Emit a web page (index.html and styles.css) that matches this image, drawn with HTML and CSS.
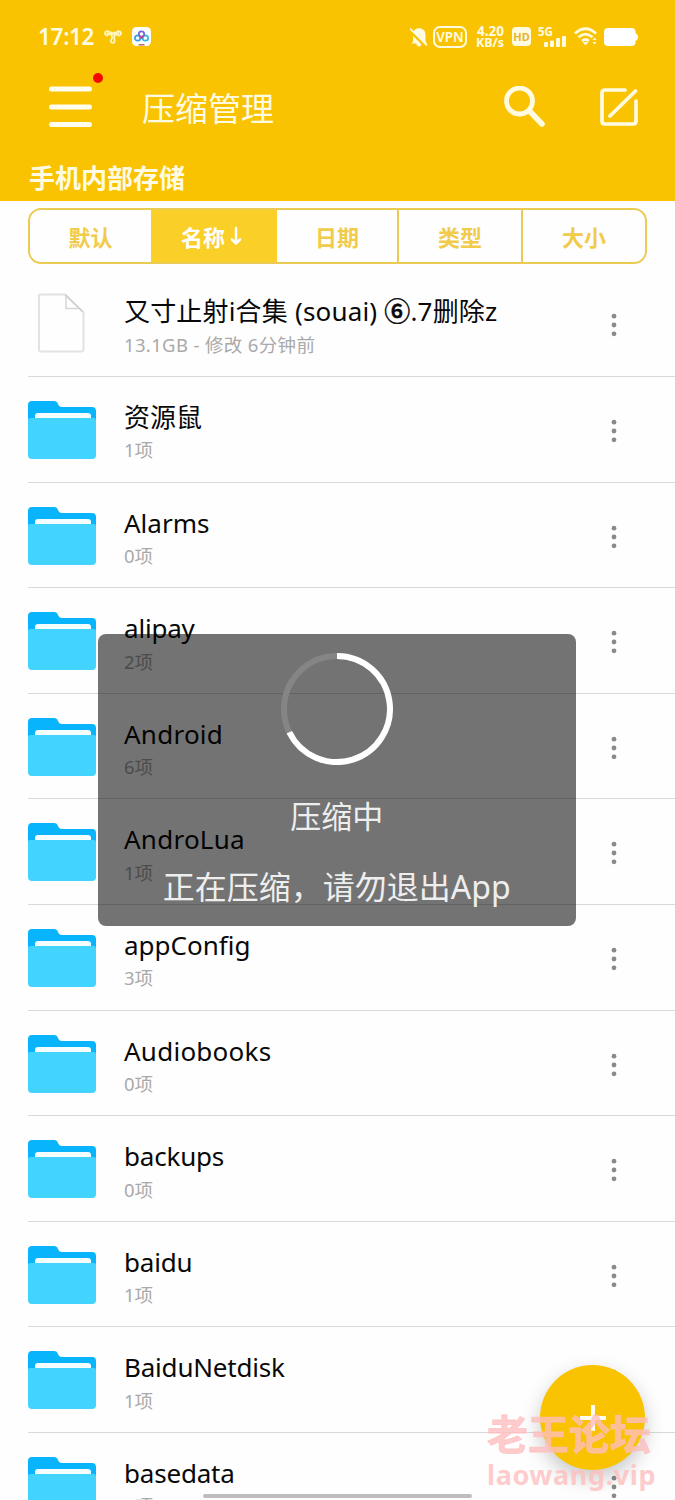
FILE: index.html
```
<!DOCTYPE html>
<html lang="zh-CN">
	<head>
		<meta charset="utf-8"/>
		<title>压缩管理</title>
		<link rel="stylesheet" href="styles.css">
	</head>
	<body>
		<!-- Shared icons -->
		<svg class="icon-defs" width="0" height="0">
			<symbol id="folder" viewBox="0 0 68 58">
				<path fill="#08b4fb" d="M4 0H26Q29 0 30 3Q31 6 34 6H64Q68 6 68 10V40H0V4Q0 0 4 0Z"/>
				<path fill="#f4fdff" d="M7 25V15Q7 12 10 12H60Q63 12 63 15V25Z"/>
				<path fill="#43d3ff" d="M0 19Q0 17 2 17H66Q68 17 68 19V54Q68 58 64 58H4Q0 58 0 54Z"/>
			</symbol>
			<symbol id="dots" viewBox="0 0 6 24">
				<g fill="#8a8a8a"><circle cx="3" cy="3.2" r="2.4"/><circle cx="3" cy="12" r="2.4"/><circle cx="3" cy="20.8" r="2.4"/></g>
			</symbol>
		</svg>

		<!-- Top area -->
		<header class="header">
			<div class="status-bar">
				<span class="clock">17:12</span>
				<svg class="knot" width="18" height="14" viewBox="0 0 18 14" fill="none" stroke="#fff6c0" stroke-width="1.8" stroke-linecap="round">
					<path d="M3.500 5.500Q1 5 1 3.200Q1.300 1 4 1.200Q6 1.500 7.500 5Q9 8 6.800 10.500Q7 13 9 12.800Q11 12.500 10.500 10Q9.500 7 11 4.500Q12.500 1.200 15 1.200Q17 1.600 17 3.500Q16.800 5.500 14.500 5.500M3.500 3.300L5.500 4.500M14.500 3.300L12.500 4.800M7.500 2.500L9 4L10.500 2.500"/>
				</svg>
				<svg class="cloud-app" width="19" height="19" viewBox="0 0 19 19">
					<rect width="19" height="19" rx="4.500" fill="#fff"/>
					<g fill="none" stroke-width="1.700"><circle cx="5.600" cy="11" r="2.700" stroke="#2d9fe8"/><circle cx="13.400" cy="11" r="2.700" stroke="#35b4ea"/><circle cx="9.500" cy="7" r="2.700" stroke="#6b6bd0"/><path d="M7.500 9L9.500 11L11.500 9" stroke="#c0478e"/></g>
					<path d="M6.500 17.800H12.500" stroke="#b76b68" stroke-width="1.500"/>
				</svg>
				<div class="status-right">
					<svg width="18" height="20" viewBox="0 0 18 20">
						<path fill="#fffbe0" d="M3 15V8Q3 1.500 9 1Q15.500 1.500 15.500 8V14L17 16.500H1ZM6 16.500H12Q11 19.500 9 19.500Q7 19.500 6 16.500Z"/>
						<path d="M0 4L15 19" stroke="#f9c302" stroke-width="2.500"/><path d="M0 1.500L17 18.500" stroke="#fffbe0" stroke-width="1.700"/>
					</svg>
					<span class="vpn">VPN</span>
					<span class="speed"><b>4.20</b><b>KB/s</b></span>
					<span class="hd">HD</span>
					<span class="signal">
						<b>5G</b>
						<svg width="22" height="11" viewBox="0 0 22 11" fill="#fffbe0"><rect y="6" width="4" height="5" rx="1"/><rect x="6" y="4.500" width="4" height="6.500" rx="1"/><rect x="12" y="2" width="4" height="9" rx="1"/><rect x="18" width="4" height="11" rx="1"/></svg>
					</span>
					<svg class="wifi" width="24" height="19" viewBox="0 0 24 19" fill="none" stroke="#fffbe0" stroke-width="2.800">
						<path d="M1 6.500Q11.500 -3 22 6.500M4.500 10.300Q11.500 4 18.500 10.300M8 14Q11.500 11 15 14"/>
						<path d="M8.500 15H14.500L11.500 18.500Z" fill="#fffbe0" stroke="none"/><path d="M18.500 13L20.500 10.500L22.500 13ZM18.500 15L20.500 17.500L22.500 15Z" fill="#fffbe0" stroke="none"/>
					</svg>
					<svg class="battery" width="34" height="18" viewBox="0 0 34 18"><rect width="31.500" height="18" rx="4" fill="#fff"/><path d="M31 5Q34 6 34 9Q34 12 31 13Z" fill="#fff"/></svg>
				</div>
			</div>
			<div class="app-bar">
				<div class="menu">
					<svg width="44" height="42" viewBox="0 0 44 42" stroke="#fffef0" stroke-width="5" stroke-linecap="round"><path d="M3.500 3H41.500M3.500 21H41.500M3.500 38.500H41.500"/></svg>
					<i class="badge"></i>
				</div>
				<h1>压缩管理</h1>
				<svg class="search" width="42" height="42" viewBox="0 0 42 42" fill="none" stroke="#fffbe3"><circle cx="15.500" cy="15" r="13" stroke-width="4.800"/><path d="M26 25.500L38 38" stroke-width="5.500" stroke-linecap="round"/></svg>
				<svg class="edit" width="38" height="38" viewBox="0 0 38 38" fill="none" stroke="#fffbe3" stroke-width="3.700" stroke-linecap="round"><path d="M25 2H5Q2 2 2 5V33Q2 36 5 36H33Q36 36 36 33V13M10 28L35.500 3"/></svg>
			</div>
			<div class="path">手机内部存储</div>
		</header>

		<!-- Sort tabs -->
		<nav class="tabs">
			<span>默认</span>
			<span class="active">名称<svg width="12" height="20" viewBox="0 0 12 20" fill="none" stroke="#fff" stroke-width="2.500" stroke-linecap="round" stroke-linejoin="round"><path d="M6 2V17.500M2 13.500L6 17.500L10 13.500"/></svg></span>
			<span>日期</span>
			<span>类型</span>
			<span>大小</span>
		</nav>

		<!-- File list -->
		<ul class="files">
			<li>
				<svg class="doc" width="68" height="60" viewBox="0 0 68 60"><path d="M12.500 1.500H37L55.500 19.500V56Q55.500 58.500 53 58.500H13Q11 58.500 11 56V3Q11 1.500 12.500 1.500Z" fill="#fefefe" stroke="#e2e2e2" stroke-width="2" stroke-linejoin="round"/><path d="M38 3V15.500H50" fill="none" stroke="#d6d6d6" stroke-width="1.500"/><path d="M37 1.500L55 19" stroke="#cfcfcf" stroke-width="1.500"/></svg>
				<div class="info"><p class="name first">又寸止射i合集 (souai) <b>⑥</b>.7删除z</p><p class="sub first">13.1GB - 修改 6分钟前</p></div>
				<svg class="more"><use href="#dots"/></svg>
			</li>
			<li><svg class="folder"><use href="#folder"/></svg><div class="info"><p class="name">资源鼠</p><p class="sub">1项</p></div><svg class="more"><use href="#dots"/></svg></li>
			<li><svg class="folder"><use href="#folder"/></svg><div class="info"><p class="name">Alarms</p><p class="sub">0项</p></div><svg class="more"><use href="#dots"/></svg></li>
			<li><svg class="folder"><use href="#folder"/></svg><div class="info"><p class="name tight">alipay</p><p class="sub">2项</p></div><svg class="more"><use href="#dots"/></svg></li>
			<li><svg class="folder"><use href="#folder"/></svg><div class="info"><p class="name wide">Android</p><p class="sub">6项</p></div><svg class="more"><use href="#dots"/></svg></li>
			<li><svg class="folder"><use href="#folder"/></svg><div class="info"><p class="name wide">AndroLua</p><p class="sub">1项</p></div><svg class="more"><use href="#dots"/></svg></li>
			<li><svg class="folder"><use href="#folder"/></svg><div class="info"><p class="name">appConfig</p><p class="sub">3项</p></div><svg class="more"><use href="#dots"/></svg></li>
			<li><svg class="folder"><use href="#folder"/></svg><div class="info"><p class="name wide">Audiobooks</p><p class="sub">0项</p></div><svg class="more"><use href="#dots"/></svg></li>
			<li><svg class="folder"><use href="#folder"/></svg><div class="info"><p class="name tight">backups</p><p class="sub">0项</p></div><svg class="more"><use href="#dots"/></svg></li>
			<li><svg class="folder"><use href="#folder"/></svg><div class="info"><p class="name tight">baidu</p><p class="sub">1项</p></div><svg class="more"><use href="#dots"/></svg></li>
			<li><svg class="folder"><use href="#folder"/></svg><div class="info"><p class="name tight">BaiduNetdisk</p><p class="sub">1项</p></div><svg class="more"><use href="#dots"/></svg></li>
			<li><svg class="folder"><use href="#folder"/></svg><div class="info"><p class="name tight">basedata</p><p class="sub">0项</p></div><svg class="more"><use href="#dots"/></svg></li>
		</ul>

		<!-- Progress dialog -->
		<div class="dialog">
			<svg width="112" height="112" viewBox="0 0 112 112" fill="none" stroke-width="6"><circle cx="56" cy="56" r="53" stroke="#858585"/><path d="M56 3A53 53 0 1 1 8.300 79.200" stroke="#fff"/></svg>
			<p>压缩中</p>
			<p class="hint">正在压缩，请勿退出App</p>
		</div>

		<!-- Floating items -->
		<div class="fab"><svg width="28" height="28" viewBox="0 0 28 28" stroke="#fffdf0" stroke-width="4"><path d="M14 1V27M1 14H27"/></svg></div>
		<div class="watermark"><span class="wm-title">老王论坛</span><span class="wm-site">laowang.vip</span></div>
		<div class="home-bar"></div>
	</body>
</html>
```
FILE: styles.css
```
* {
	box-sizing: border-box;
	margin: 0;
	padding: 0;
}

/*Basic body design*/
body {
	font-family: "Noto Sans", "Noto Sans CJK SC", sans-serif;
	background-color: #fefefe;
	position: relative;
	overflow: hidden;
	height: 1500px;
	width: 675px;
}

svg {
	display: block;
	flex: none;
}

.icon-defs {
	position: absolute;
}

/*Header*/
.header {
	background-color: #f9c302;
	color: #fffbe3;
	height: 200.5px;
}

.status-bar {
	align-items: center;
	padding: 0 37px 0 38px;
	display: flex;
	height: 73px;
}

.clock {
	letter-spacing: -0.3px;
	font-size: 22.5px;
	font-weight: 600;
	line-height: 24px;
	width: 66px;
}

.cloud-app {
	margin-left: 10px;
}

.status-right {
	align-items: center;
	margin-left: auto;
	display: flex;
}

.vpn {
	border: 2px solid #fffbe0;
	border-radius: 7px;
	text-align: center;
	line-height: 18px;
	font-weight: 600;
	font-size: 13.5px;
	margin-left: 5px;
	height: 22px;
	width: 34px;
}

.speed {
	flex-direction: column;
	align-items: flex-end;
	line-height: 12px;
	margin-left: 7px;
	display: flex;
	width: 30px;
}

.speed b {
	font-weight: 700;
	font-size: 12.5px;
}

.speed b:first-child {
	font-size: 13.5px;
}

.hd {
	background-color: #fffbe0;
	border-radius: 4px;
	text-align: center;
	line-height: 19px;
	font-weight: 700;
	font-size: 11px;
	color: #e4b52c;
	margin-left: 8px;
	height: 19px;
	width: 19px;
}

.signal {
	flex-direction: column;
	margin-left: 7px;
	display: flex;
	width: 28px;
}

.signal b {
	line-height: 9px;
	font-size: 11.5px;
}

.signal svg {
	align-self: flex-end;
}

.wifi {
	margin-left: 8px;
}

.battery {
	margin-left: 6px;
}

.app-bar {
	align-items: center;
	padding: 0 37px 0 48px;
	display: flex;
	height: 68px;
}

.menu {
	position: relative;
}

.badge {
	background-color: #f40a00;
	border-radius: 50%;
	position: absolute;
	height: 10px;
	width: 10px;
	right: -11px;
	top: -13px;
}

.app-bar h1 {
	font-weight: 400;
	font-size: 33px;
	line-height: 44px;
	padding-top: 3px;
	margin-left: 50px;
}

.search {
	margin-left: auto;
}

.edit {
	margin-left: 54px;
}

.path {
	padding-left: 29px;
	line-height: 38px;
	margin-top: 18px;
	font-weight: 700;
	font-size: 26px;
}

/*Sort tabs*/
.tabs {
	grid-template-columns: 121px 124px 122px 124px 124px;
	border: 2px solid #eccb55;
	margin: 7.5px 28px 0;
	border-radius: 13px;
	overflow: hidden;
	display: grid;
	height: 56px;
}

.tabs span {
	border-left: 2px solid #eccb55;
	justify-content: center;
	align-items: center;
	font-weight: 700;
	font-size: 22px;
	color: #f1cb4a;
	display: flex;
}

.tabs span:first-child {
	border-left: none;
}

.tabs .active {
	background-color: #facf27;
	border-color: #facf27;
	padding-right: 5px;
	color: #fff;
	gap: 5px;
}

.tabs .active + span {
	border-color: #facf27;
}

/*File list*/
.files {
	list-style: none;
	padding-left: 28px;
	margin-top: 7.4px;
}

.files li {
	border-bottom: 1.5px solid #d9d9d9;
	padding: 0 58px 0 0;
	display: flex;
	height: 105.6px;
}

.folder {
	margin-top: 24px;
	height: 58px;
	width: 68px;
}

.doc {
	margin-top: 21.5px;
}

.info {
	padding: 22px 0 0 28px;
	flex: 1;
}

.name {
	white-space: nowrap;
	line-height: 36px;
	font-size: 26px;
	color: #080808;
}

.name.first {
	letter-spacing: 0.18px;
}

.name b {
	font-weight: 500;
	-webkit-text-stroke: 0.5px #080808;
}

.name.wide {
	letter-spacing: 0.25px;
}

.name.tight {
	letter-spacing: -0.2px;
}

.sub {
	line-height: 26px;
	font-size: 18.5px;
	margin-top: 2.5px;
	color: #a9a9a9;
}

.sub.first {
	letter-spacing: 0.35px;
}

.more {
	margin-top: 42px;
	height: 24px;
	width: 6px;
}

/*Progress dialog*/
.dialog {
	background-color: rgba(0, 0, 0, 0.55);
	flex-direction: column;
	align-items: center;
	border-radius: 8px;
	position: absolute;
	padding-top: 19px;
	display: flex;
	color: #eee;
	height: 292px;
	width: 478.5px;
	left: 97.5px;
	top: 634px;
}

.dialog p {
	line-height: 42px;
	margin-top: 30px;
	font-size: 31px;
}

.dialog .hint {
	margin-top: 29px;
	font-size: 32px;
}

/*Add button*/
.fab {
	box-shadow: 0 8px 20px rgba(0, 0, 0, 0.22);
	background-color: #f9c302;
	justify-content: center;
	align-items: center;
	border-radius: 50%;
	position: absolute;
	display: flex;
	height: 105px;
	width: 105px;
	left: 540px;
	top: 1365px;
}

.watermark {
	color: rgba(255, 190, 190, 0.8);
	flex-direction: column;
	position: absolute;
	font-weight: 700;
	display: flex;
	left: 487px;
	top: 1410px;
}

.wm-title {
	-webkit-text-stroke: 0.8px rgba(255, 190, 190, 0.8);
	line-height: 48px;
	font-size: 41px;
}

.wm-site {
	letter-spacing: 0.6px;
	line-height: 33px;
	font-size: 27px;
}

.home-bar {
	background-color: #bdbdbd;
	border-radius: 2px;
	position: absolute;
	height: 4px;
	width: 269px;
	left: 203px;
	top: 1494px;
}
```
